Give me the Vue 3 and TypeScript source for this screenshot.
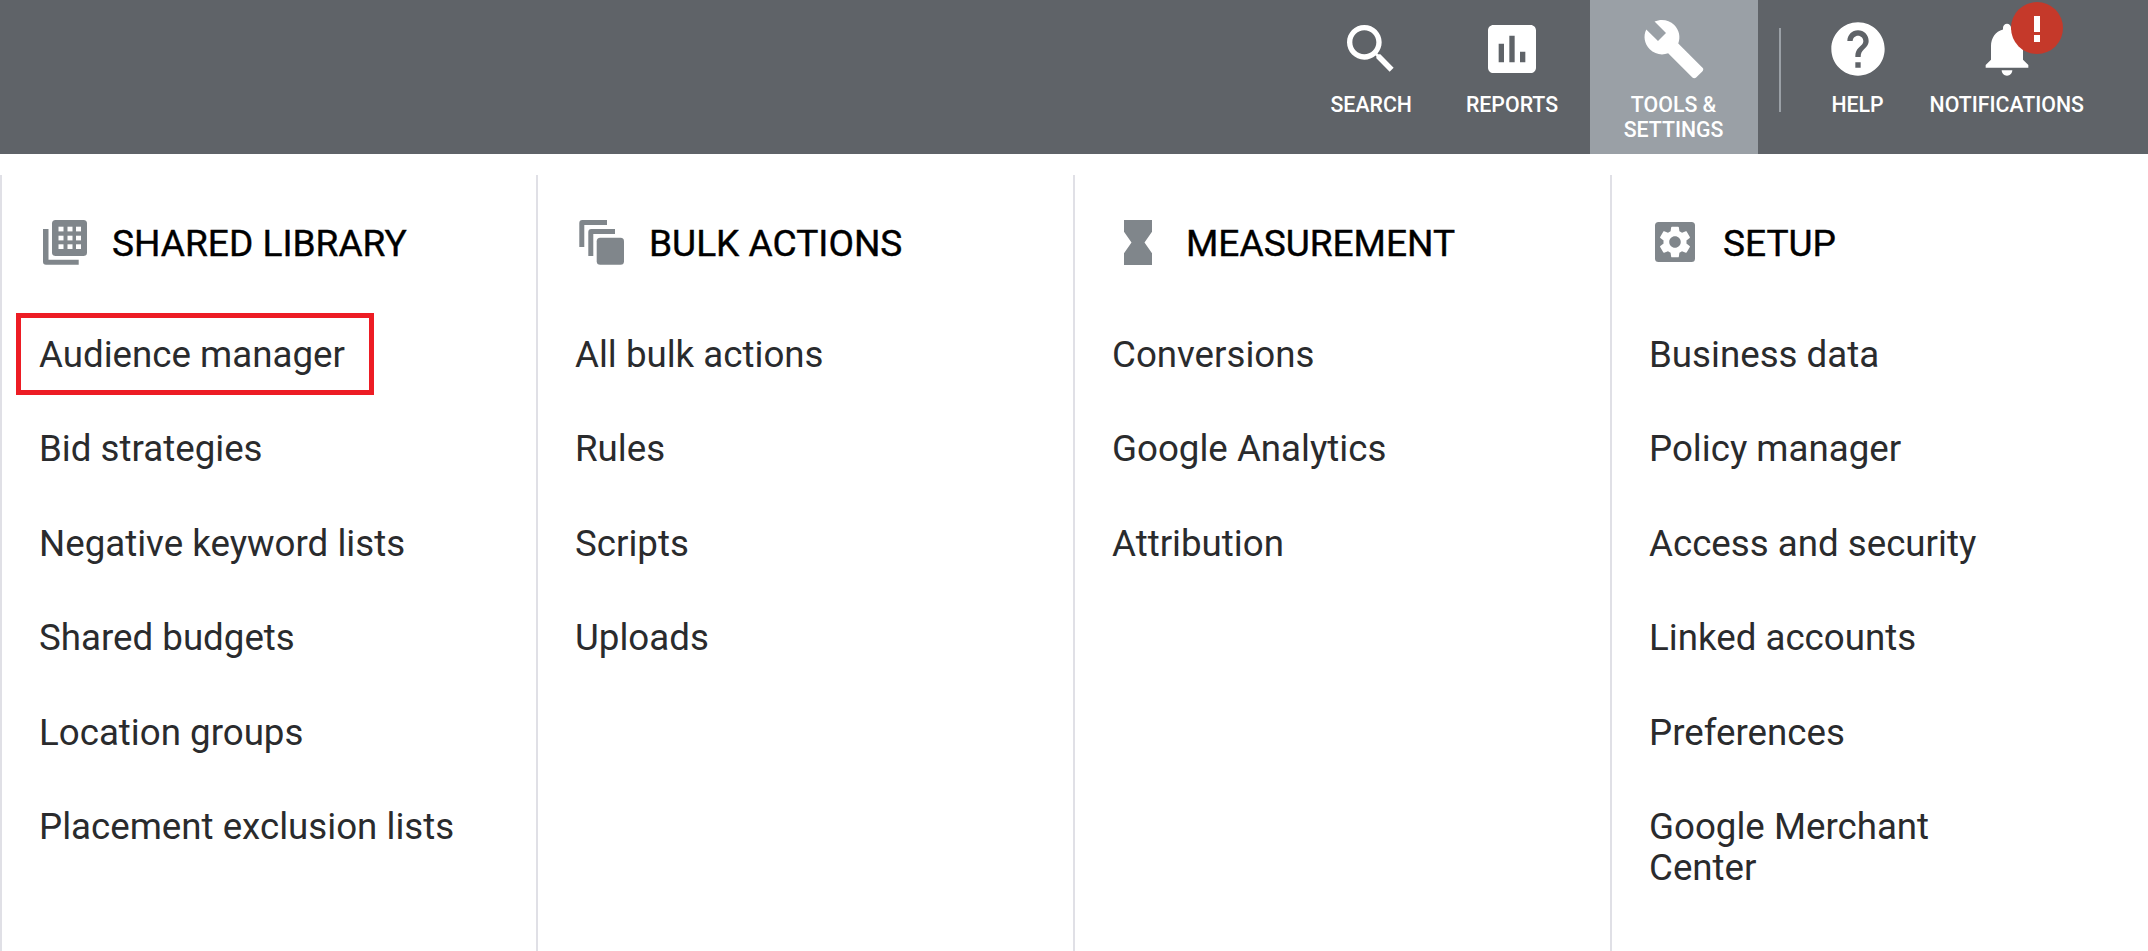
<script setup lang="ts">
interface Column { title: string; items: string[]; icon: string }
const columns: Column[] = [
  { title: 'SHARED LIBRARY', icon: 'library', items: ['Audience manager', 'Bid strategies', 'Negative keyword lists', 'Shared budgets', 'Location groups', 'Placement exclusion lists'] },
  { title: 'BULK ACTIONS', icon: 'bulk', items: ['All bulk actions', 'Rules', 'Scripts', 'Uploads'] },
  { title: 'MEASUREMENT', icon: 'measure', items: ['Conversions', 'Google Analytics', 'Attribution'] },
  { title: 'SETUP', icon: 'setup', items: ['Business data', 'Policy manager', 'Access and security', 'Linked accounts', 'Preferences', 'Google Merchant Center'] },
]
const dotX = [17.5, 26.5, 35]
const dotY = [8.7, 17.7, 26.3]
</script>

<template>
  <div class="page">
    <header class="topbar">
      <div class="nav search">
        <svg class="nav-icon" viewBox="0 0 24 24"><path d="M15.5 14h-.79l-.28-.27C15.41 12.59 16 11.11 16 9.5 16 5.91 13.09 3 9.5 3S3 5.91 3 9.5 5.91 16 9.5 16c1.61 0 3.09-.59 4.23-1.57l.27.28v.79l5 4.99L20.49 19l-4.99-5zm-6 0C7.01 14 5 11.99 5 9.5S7.01 5 9.5 5 14 7.01 14 9.5 11.99 14 9.5 14z" /></svg>
        <span class="nav-label">SEARCH</span>
      </div>
      <div class="nav reports">
        <svg class="nav-icon" viewBox="0 0 24 24"><path d="M19 3H5c-1.1 0-2 .9-2 2v14c0 1.1.9 2 2 2h14c1.1 0 2-.9 2-2V5c0-1.1-.9-2-2-2zM9 17H7v-7h2v7zm4 0h-2V7h2v10zm4 0h-2v-4h2v4z" /></svg>
        <span class="nav-label">REPORTS</span>
      </div>
      <div class="nav tools">
        <svg class="nav-icon" viewBox="0 0 24 24"><path d="M22.7 19l-9.1-9.1c.9-2.3.4-5-1.5-6.9-2-2-5-2.4-7.4-1.3L9 6 6 9 1.6 4.7C.4 7.1.9 10.1 2.9 12.1c1.9 1.9 4.6 2.4 6.9 1.5l9.1 9.1c.4.4 1 .4 1.4 0l2.3-2.3c.5-.4.5-1.1.1-1.4z" /></svg>
        <span class="nav-label">TOOLS &amp;<br />SETTINGS</span>
      </div>
      <div class="sep"></div>
      <div class="nav help">
        <svg class="nav-icon" viewBox="0 0 24 24"><path d="M12 2C6.48 2 2 6.48 2 12s4.48 10 10 10 10-4.48 10-10S17.52 2 12 2zm1 17h-2v-2h2v2zm2.07-7.75l-.9.92C13.45 12.9 13 13.5 13 15h-2v-.5c0-1.1.45-2.1 1.17-2.83l1.24-1.26c.37-.36.59-.86.59-1.41 0-1.1-.9-2-2-2s-2 .9-2 2H8c0-2.21 1.79-4 4-4s4 1.79 4 4c0 .88-.36 1.68-.93 2.25z" /></svg>
        <span class="nav-label">HELP</span>
      </div>
      <div class="nav notifications">
        <svg class="nav-icon" viewBox="0 0 24 24"><path d="M12 22c1.1 0 2-.9 2-2h-4c0 1.1.89 2 2 2zm6-6v-5c0-3.07-1.64-5.64-4.5-6.32V4c0-.83-.67-1.5-1.5-1.5s-1.5.67-1.5 1.5v.68C7.63 5.36 6 7.92 6 11v5l-2 2v1h16v-1l-2-2z" /></svg>
        <span class="nav-label">NOTIFICATIONS</span>
        <span class="badge">
          <i class="bang"></i>
          <i class="bang-dot"></i>
        </span>
      </div>
    </header>

    <main class="columns">
      <section v-for="col in columns" :key="col.title" class="column" :class="{ narrow: col.icon === 'setup' }">
        <div class="heading">
          <svg class="head-icon" viewBox="0 0 48 48">
            <template v-if="col.icon === 'library'">
              <rect x="11" y="2" width="35" height="36" rx="3.5" />
              <template v-for="y in dotY" :key="y">
                <rect v-for="x in dotX" :key="x" :x="x" :y="y" width="5" height="4.7" fill="#fff" />
              </template>
              <path d="M2 11h5.5v30.7H37.7v5H5a3 3 0 0 1-3-3z" />
            </template>
            <template v-else-if="col.icon === 'bulk'">
              <path d="M1.3 29V5a3 3 0 0 1 3-3H29v5H6.3v22z" />
              <path d="M10.3 38V14a3 3 0 0 1 3-3H37v5H15.3v22z" />
              <rect x="18.7" y="19.7" width="27.3" height="27" rx="3.5" />
            </template>
            <template v-else-if="col.icon === 'measure'">
              <polygon points="9,2 37,2 37,13.7 29.5,24.5 37,35.3 37,47 9,47 9,35.3 16.5,24.5 9,13.7" />
            </template>
            <template v-else>
              <rect x="3" y="4" width="40" height="40" rx="3.5" />
              <path transform="translate(3.8 4.8) scale(1.6)" fill="#fff" fill-rule="evenodd" d="M19.14 12.94c.04-.3.06-.61.06-.94 0-.32-.02-.64-.07-.94l2.03-1.58c.18-.14.23-.41.12-.61l-1.92-3.32c-.12-.22-.37-.29-.59-.22l-2.39.96c-.5-.38-1.03-.7-1.62-.94l-.36-2.54c-.04-.24-.24-.41-.48-.41h-3.84c-.24 0-.43.17-.47.41l-.36 2.54c-.59.24-1.13.57-1.62.94l-2.39-.96c-.22-.08-.47 0-.59.22L2.74 8.87c-.12.21-.08.47.12.61l2.03 1.58c-.05.3-.09.63-.09.94s.02.64.07.94l-2.03 1.58c-.18.14-.23.41-.12.61l1.92 3.32c.12.22.37.29.59.22l2.39-.96c.5.38 1.03.7 1.62.94l.36 2.54c.05.24.24.41.48.41h3.84c.24 0 .44-.17.47-.41l.36-2.54c.59-.24 1.13-.56 1.62-.94l2.39.96c.22.08.47 0 .59-.22l1.92-3.32c.12-.22.07-.47-.12-.61l-2.01-1.58zM12 15.6c-1.98 0-3.6-1.62-3.6-3.6s1.62-3.6 3.6-3.6 3.6 1.62 3.6 3.6-1.62 3.6-3.6 3.6z" />
            </template>
          </svg>
          <span class="head-title">{{ col.title }}</span>
        </div>
        <ul class="items">
          <li v-for="item in col.items" :key="item" class="item">
            <span class="item-text">
              {{ item }}
              <span v-if="item === 'Audience manager'" class="callout"></span>
            </span>
          </li>
        </ul>
      </section>
    </main>
  </div>
</template>

<style scoped>
.page {
  width: 2148px;
  height: 951px;
  overflow: hidden;
  background: #fff;
  font-family: Roboto, sans-serif;
}
.topbar {
  height: 154px;
  background: #5f6368;
  display: flex;
  align-items: stretch;
  justify-content: flex-end;
  padding-right: 64px;
  box-sizing: border-box;
}
.nav {
  position: relative;
  display: flex;
  flex-direction: column;
  align-items: center;
  padding-top: 17px;
  box-sizing: border-box;
}
.nav-icon {
  width: 64px;
  height: 64px;
  fill: #fff;
  display: block;
}
.nav-label {
  margin-top: 11px;
  font-size: 21.3px;
  line-height: 25px;
  font-weight: 500;
  color: #fff;
  text-align: center;
  white-space: nowrap;
}
.search { margin-right: 54px; }
.reports { margin-right: 31.5px; }
.tools {
  width: 168px;
  background: #9aa0a6;
}
.sep {
  width: 2px;
  height: 84px;
  margin: 28px 45px 0 21px;
  background: #9aa0a6;
}
.help { margin-right: 40px; }
.badge {
  position: absolute;
  left: 50%;
  top: 2px;
  margin-left: 4px;
  width: 52px;
  height: 52px;
  border-radius: 50%;
  background: #c5392a;
}
.bang {
  position: absolute;
  left: 23px;
  top: 14px;
  width: 6px;
  height: 16px;
  background: #fff;
}
.bang-dot {
  position: absolute;
  left: 23px;
  top: 33px;
  width: 6px;
  height: 7px;
  background: #fff;
}
.columns {
  display: flex;
  margin-top: 21px;
  height: 776px;
}
.column {
  width: 537px;
  box-sizing: border-box;
  border-left: 2px solid #e0e0e6;
  padding-left: 40px;
}
.column:first-child {
  width: 536px;
  padding-left: 39px;
}
.heading {
  display: flex;
  align-items: center;
  height: 48px;
  margin-top: 44.4px;
}
.head-icon {
  width: 48px;
  height: 48px;
  flex: none;
  fill: #80868b;
  margin-top: -2px;
}
.head-title {
  margin-left: 23px;
  font-size: 37.1px;
  font-weight: 400;
  -webkit-text-stroke: 0.4px #000;
  color: #000;
  white-space: nowrap;
}
.items {
  list-style: none;
  margin: 66.6px 0 0;
  padding: 0;
}
.item {
  font-size: 36.7px;
  line-height: 41px;
  color: #2a2b2d;
  margin-bottom: 53.5px;
}
.narrow .item {
  max-width: 330px;
}
.item-text {
  position: relative;
  display: inline-block;
  margin-left: -3px;
}
.column:first-child .item-text {
  margin-left: -2px;
}
.callout {
  position: absolute;
  left: -23px;
  right: -29px;
  top: -21px;
  bottom: -20px;
  border: 5px solid #ed1c24;
}
</style>
